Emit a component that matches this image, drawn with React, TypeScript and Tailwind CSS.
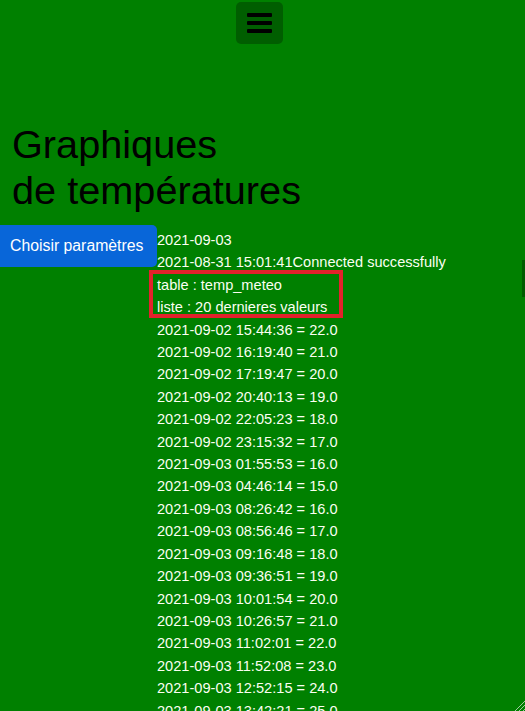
import React from "react";

const readings = [
  "2021-09-02 15:44:36 = 22.0",
  "2021-09-02 16:19:40 = 21.0",
  "2021-09-02 17:19:47 = 20.0",
  "2021-09-02 20:40:13 = 19.0",
  "2021-09-02 22:05:23 = 18.0",
  "2021-09-02 23:15:32 = 17.0",
  "2021-09-03 01:55:53 = 16.0",
  "2021-09-03 04:46:14 = 15.0",
  "2021-09-03 08:26:42 = 16.0",
  "2021-09-03 08:56:46 = 17.0",
  "2021-09-03 09:16:48 = 18.0",
  "2021-09-03 09:36:51 = 19.0",
  "2021-09-03 10:01:54 = 20.0",
  "2021-09-03 10:26:57 = 21.0",
  "2021-09-03 11:02:01 = 22.0",
  "2021-09-03 11:52:08 = 23.0",
  "2021-09-03 12:52:15 = 24.0",
  "2021-09-03 13:42:21 = 25.0",
];

export default function App() {
  return (
    <div className="relative h-[711px] w-full overflow-hidden bg-[#008000] font-['Liberation_Sans',Arial,sans-serif]">
      <div className="flex justify-center pr-[6px] pt-[2px]">
        <button className="flex h-[42px] w-[47px] flex-col items-center justify-center gap-[4px] rounded-[5px] bg-[#005e00]">
          <span className="block h-[4px] w-[25px] rounded-[1px] bg-black" />
          <span className="block h-[4px] w-[25px] rounded-[1px] bg-black" />
          <span className="block h-[4px] w-[25px] rounded-[1px] bg-black" />
        </button>
      </div>

      <h1 className="mt-[77px] pl-[12px] text-[39.7px] leading-[46px] font-normal text-black">
        Graphiques
        <br />
        de températures
      </h1>

      <div className="mt-[12px] flex items-start">
        <button className="flex h-[42px] w-[157px] shrink-0 items-center rounded-r-[5px] bg-[#0866d9] pl-[10px] text-[15.8px] text-white">
          Choisir paramètres
        </button>
        <div className="pt-[4px] text-[14.6px] leading-[22.4px] text-[#fbfff2]">
          <div>2021-09-03</div>
          <div className="whitespace-nowrap">2021-08-31 15:01:41Connected successfully</div>
          <div className="relative">
            <div className="pointer-events-none absolute -left-[8px] -top-[4px] h-[48px] w-[194px] border-4 border-[#e3222b]" />
            <div>table : temp_meteo</div>
            <div>liste : 20 dernieres valeurs</div>
          </div>
          {readings.map((r) => (
            <div key={r} className="whitespace-nowrap">
              {r}
            </div>
          ))}
        </div>
      </div>

      <div className="absolute right-0 top-[260px] h-[37px] w-[3px] bg-[#005c00]" />
      <svg
        className="absolute bottom-0 right-0"
        width="12"
        height="12"
        viewBox="0 0 12 12"
      >
        <line x1="12" y1="2" x2="2" y2="12" stroke="#9fc89f" strokeWidth="1" />
        <line x1="12" y1="6" x2="6" y2="12" stroke="#9fc89f" strokeWidth="1" />
        <line x1="12" y1="10" x2="10" y2="12" stroke="#9fc89f" strokeWidth="1" />
      </svg>
    </div>
  );
}
